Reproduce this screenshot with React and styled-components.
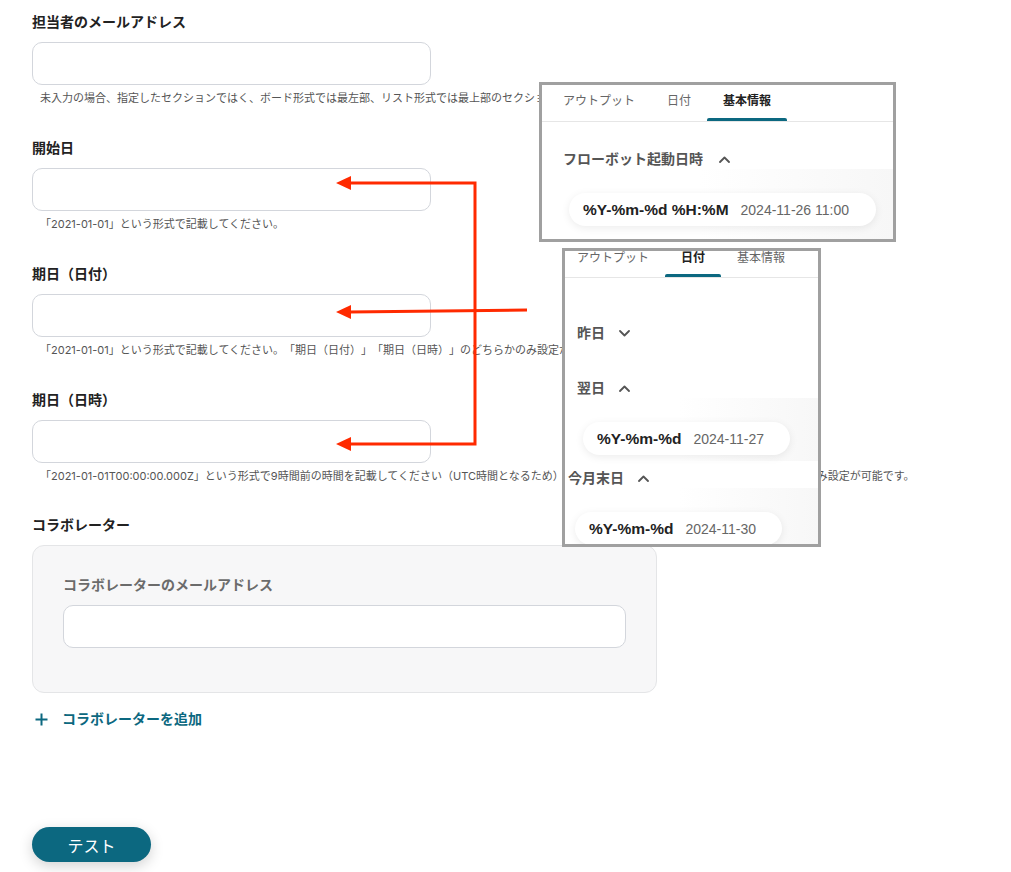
import React from 'react';
import styled, { createGlobalStyle } from 'styled-components';

const TEAL = '#0c6880';
const FONT = '"Liberation Sans", "Noto Sans CJK JP", sans-serif';
const HELP_FONT = 'Inter, "Noto Sans CJK JP", sans-serif';

const GlobalStyle = createGlobalStyle`
  html, body {
    margin: 0;
    padding: 0;
    background: #fff;
  }
  body {
    font-family: ${FONT};
    color: #222;
    text-spacing-trim: space-all;
  }
`;

const Page = styled.div`
  position: relative;
  width: 1011px;
  height: 872px;
  overflow: hidden;
  background: #fff;
`;

const Form = styled.div`
  display: flex;
  flex-direction: column;
  padding: 12px 0 0 32px;
`;

const Field = styled.div`
  display: flex;
  flex-direction: column;
  margin-bottom: ${(p) => p.$gap ?? 32}px;
`;

const Label = styled.div`
  font-size: 14px;
  line-height: 20px;
  font-weight: 700;
  color: ${(p) => (p.$muted ? '#6b6b6b' : '#222')};
  margin-bottom: 10px;
`;

const Input = styled.div`
  box-sizing: border-box;
  width: ${(p) => p.$width || 399}px;
  height: 43px;
  border: 1px solid #d3d6dc;
  border-radius: 10px;
  background: #fff;
`;

const Help = styled.div`
  margin-top: 5px;
  padding-left: 8px;
  font-family: ${HELP_FONT};
  font-size: 11px;
  line-height: 16px;
  color: #555;
  white-space: nowrap;
  text-spacing-trim: space-all;
`;

const CollabBox = styled.div`
  box-sizing: border-box;
  width: 625px;
  height: 148px;
  padding: 29px 30px 0 30px;
  border: 1px solid #e4e5e7;
  border-radius: 12px;
  background: #f7f7f8;
`;

const AddLink = styled.div`
  display: flex;
  align-items: center;
  gap: 14px;
  margin-top: 18px;
  padding-left: 3px;
  font-size: 14px;
  line-height: 16px;
  font-weight: 700;
  color: ${TEAL};
`;

const TestButton = styled.button`
  margin-top: 100px;
  width: 119px;
  height: 35px;
  border: none;
  border-radius: 18px;
  background: ${TEAL};
  color: #fff;
  font-family: ${FONT};
  font-size: 16px;
  box-shadow: 0 4px 14px rgba(0, 0, 0, 0.18);
`;

/* ---- overlay screenshots ---- */

const Panel = styled.div`
  position: absolute;
  left: ${(p) => p.$left}px;
  top: ${(p) => p.$top}px;
  width: ${(p) => p.$w}px;
  height: ${(p) => p.$h}px;
  box-sizing: border-box;
  border: 3px solid #a0a0a0;
  background: #fff;
  overflow: hidden;
  display: flex;
  flex-direction: column;
`;

const TabRow = styled.div`
  display: flex;
  height: ${(p) => p.$h}px;
  padding-left: ${(p) => p.$pad}px;
  margin-left: ${(p) => p.$shift || 0}px;
  border-bottom: 1px solid #e6e6e6;
  flex-shrink: 0;
`;

const Tab = styled.div`
  position: relative;
  padding: ${(p) => p.$top}px 16px 0;
  font-size: 12px;
  line-height: 15px;
  font-weight: ${(p) => (p.$active ? 700 : 400)};
  color: ${(p) => (p.$active ? '#222' : '#666')};
  white-space: nowrap;

  &::after {
    content: '';
    display: ${(p) => (p.$active ? 'block' : 'none')};
    position: absolute;
    left: 0;
    right: 0;
    bottom: 0;
    height: 3px;
    border-radius: 2px 2px 0 0;
    background: ${TEAL};
  }
`;

const GroupTitle = styled.div`
  display: flex;
  align-items: center;
  gap: ${(p) => p.$gap || 14}px;
  margin-top: ${(p) => p.$mt}px;
  padding-left: ${(p) => p.$pl}px;
  font-size: 14px;
  line-height: 20px;
  font-weight: 700;
  color: #555;
  white-space: nowrap;
  background: #fff;
`;

const ChipArea = styled.div`
  padding: ${(p) => p.$pt}px 0 ${(p) => p.$pb || 0}px ${(p) => p.$pl}px;
  background: linear-gradient(to right, #fff 0%, #fff 45%, #f7f7f7 100%);
`;

const Chip = styled.div`
  box-sizing: border-box;
  display: flex;
  align-items: center;
  gap: 12px;
  width: ${(p) => p.$w}px;
  height: 33px;
  padding-left: 14px;
  border-radius: 17px;
  background: #fff;
  box-shadow: 0 2px 8px rgba(0, 0, 0, 0.08);
  white-space: nowrap;
`;

const ChipKey = styled.span`
  font-size: 15.5px;
  font-weight: 700;
  color: #222;
`;

const ChipValue = styled.span`
  font-size: 14px;
  color: #666;
`;

const Arrows = styled.svg`
  position: absolute;
  left: 0;
  top: 0;
  pointer-events: none;
`;

const Chevron = ({ up }) => (
  <svg width="11" height="7" viewBox="0 0 11 7">
    <polyline
      points={up ? '1,6 5.5,1.5 10,6' : '1,1 5.5,5.5 10,1'}
      fill="none"
      stroke="#555"
      strokeWidth="1.8"
      strokeLinecap="round"
      strokeLinejoin="round"
    />
  </svg>
);

const Plus = () => (
  <svg width="13" height="13" viewBox="0 0 13 13">
    <path d="M6.5 0.5v12M0.5 6.5h12" stroke={TEAL} strokeWidth="2" />
  </svg>
);

export default function App() {
  return (
    <Page>
      <GlobalStyle />
      <Form>
        <Field>
          <Label>担当者のメールアドレス</Label>
          <Input />
          <Help>未入力の場合、指定したセクションではく、ボード形式では最左部、リスト形式では最上部のセクションに追加されます。</Help>
        </Field>
        <Field>
          <Label>開始日</Label>
          <Input />
          <Help>「2021-01-01」という形式で記載してください。</Help>
        </Field>
        <Field>
          <Label>期日（日付）</Label>
          <Input />
          <Help>「2021-01-01」という形式で記載してください。「期日（日付）」「期日（日時）」のどちらかのみ設定が可能です。</Help>
        </Field>
        <Field $gap={31}>
          <Label>期日（日時）</Label>
          <Input />
          <Help>「2021-01-01T00:00:00.000Z」という形式で9時間前の時間を記載してください（UTC時間となるため）。「期日（日付）」「期日（日時）」のどちらかのみ設定が可能です。</Help>
        </Field>
        <Field $gap={0}>
          <Label>コラボレーター</Label>
          <CollabBox>
            <Label $muted>コラボレーターのメールアドレス</Label>
            <Input $width={563} />
          </CollabBox>
        </Field>
        <AddLink>
          <Plus />
          コラボレーターを追加
        </AddLink>
        <div>
          <TestButton>テスト</TestButton>
        </div>
      </Form>

      <Panel $left={539} $top={82} $w={357} $h={160}>
        <TabRow $h={36} $pad={5}>
          <Tab $top={9}>アウトプット</Tab>
          <Tab $top={9}>日付</Tab>
          <Tab $top={9} $active>基本情報</Tab>
        </TabRow>
        <GroupTitle $mt={27} $pl={21} $gap={16}>
          フローボット起動日時 <Chevron up />
        </GroupTitle>
        <ChipArea $pt={24} $pb={20} $pl={27}>
          <Chip $w={307}>
            <ChipKey>%Y-%m-%d %H:%M</ChipKey>
            <ChipValue>2024-11-26 11:00</ChipValue>
          </Chip>
        </ChipArea>
      </Panel>

      <Panel $left={562} $top={248} $w={259} $h={299}>
        <TabRow $h={26} $pad={0} $shift={-4}>
          <Tab $top={0}>アウトプット</Tab>
          <Tab $top={0} $active>日付</Tab>
          <Tab $top={0}>基本情報</Tab>
        </TabRow>
        <GroupTitle $mt={45} $pl={12}>
          昨日 <Chevron />
        </GroupTitle>
        <GroupTitle $mt={35} $pl={12}>
          翌日 <Chevron up />
        </GroupTitle>
        <ChipArea $pt={24} $pb={6} $pl={18}>
          <Chip $w={207}>
            <ChipKey>%Y-%m-%d</ChipKey>
            <ChipValue>2024-11-27</ChipValue>
          </Chip>
        </ChipArea>
        <GroupTitle $mt={7} $pl={3} $gap={14}>
          今月末日 <Chevron up />
        </GroupTitle>
        <ChipArea $pt={24} $pb={8} $pl={10}>
          <Chip $w={207}>
            <ChipKey>%Y-%m-%d</ChipKey>
            <ChipValue>2024-11-30</ChipValue>
          </Chip>
        </ChipArea>
      </Panel>

      <Arrows width="1011" height="872" viewBox="0 0 1011 872">
        <g stroke="#ff2a00" strokeWidth="3" fill="none">
          <polyline points="349,183 475,183 475,444 349,444" />
          <line x1="527" y1="310" x2="349" y2="312" />
        </g>
        <g fill="#ff2a00">
          <polygon points="336,183 351,176 351,190" />
          <polygon points="336,312 351,305 351,319" />
          <polygon points="336,444 351,437 351,451" />
        </g>
      </Arrows>
    </Page>
  );
}
